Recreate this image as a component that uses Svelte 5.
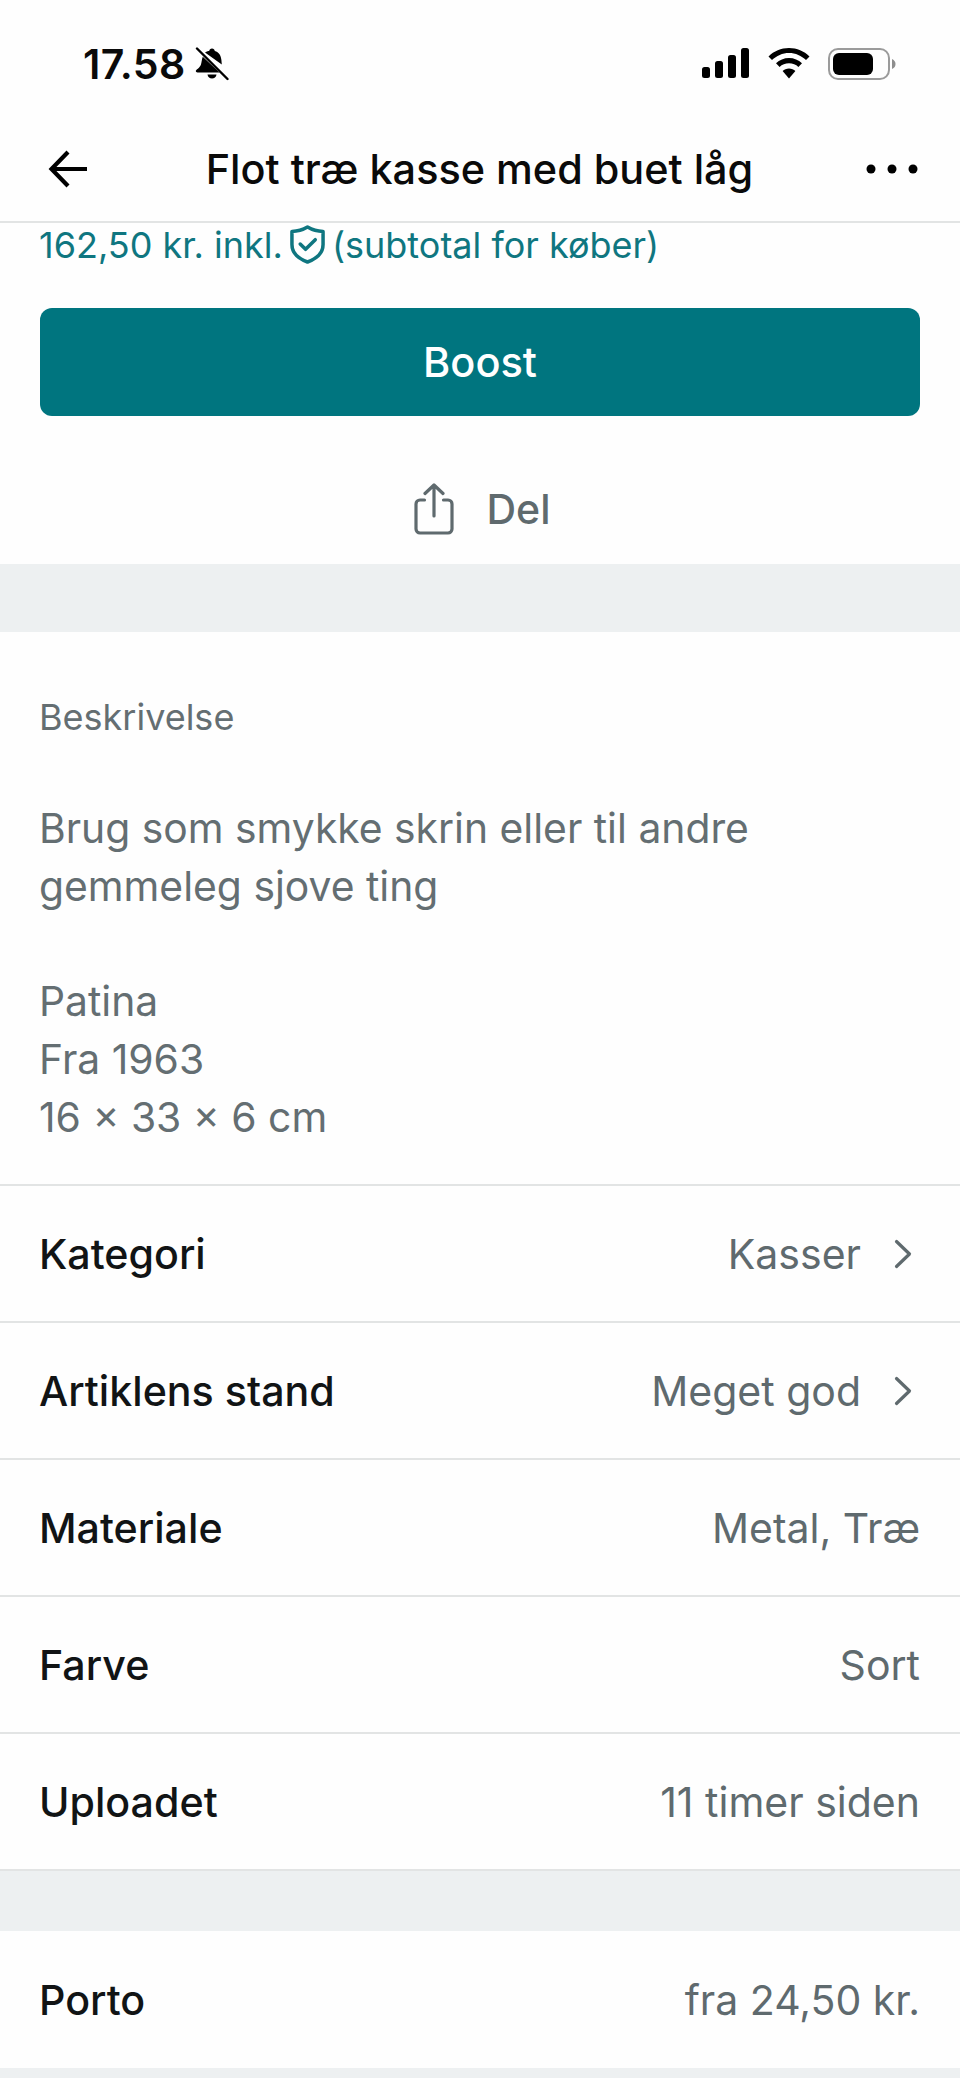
<script>
  const rows = [
    { label: 'Kategori', value: 'Kasser', chevron: true },
    { label: 'Artiklens stand', value: 'Meget god', chevron: true },
    { label: 'Materiale', value: 'Metal, Træ' },
    { label: 'Farve', value: 'Sort' },
    { label: 'Uploadet', value: '11 timer siden' }
  ];
</script>

<div class="page">
  <div class="status">
    <div class="time-group">
      <span class="time">17.58</span>
      <svg class="bell" viewBox="0 0 34 34" width="34" height="34" aria-hidden="true">
        <path d="M17 1.500c1.600 0 2.600 1 2.800 2.400 4.200 1.100 6.200 4.600 6.600 9l0.400 4.600L10 5.500C12 4 13.400 3.900 14.200 3.900 14.400 2.500 15.400 1.500 17 1.500z" fill="#000"/>
        <path d="M7.800 9.700 24.500 25.500H2.500c-1 0-1.700-.6-1.700-1.400 0-1.600 3.800-3.100 5-6.200 .9-2.400 1-6.200 2-8.200z" fill="#000"/>
        <path d="M12.500 27.500h9c-.3 2.400-2.300 4-4.500 4s-4.200-1.600-4.500-4z" fill="#000"/>
        <path d="M2 1.500 32.500 32" stroke="#000" stroke-width="2.400" stroke-linecap="round"/>
      </svg>
    </div>
    <div class="sys">
      <svg viewBox="0 0 48 31" width="48" height="31" aria-hidden="true">
        <rect x="0" y="19" width="8" height="11" rx="2.500"/>
        <rect x="13" y="13" width="8" height="17" rx="2.500"/>
        <rect x="26" y="7" width="8" height="23" rx="2.500"/>
        <rect x="39" y="0" width="8" height="30" rx="2.500"/>
      </svg>
      <svg viewBox="0 0 42 31" width="42" height="31" aria-hidden="true">
        <path d="M21 0C13 0 6 3 0.500 8.500l3.500 3.600C8.500 7.700 14.500 5 21 5s12.500 2.700 17 7.100l3.500-3.600C36 3 29 0 21 0z"/>
        <path d="M21 10c-5 0-9.500 2-13 5.300l3.600 3.600C14 16.500 17.400 15.200 21 15.200s7 1.300 9.400 3.700l3.600-3.600C30.500 12 26 10 21 10z"/>
        <path d="M21 20.500c-2.500 0-4.800 1-6.400 2.600L21 30.500l6.400-7.400c-1.600-1.600-3.900-2.600-6.400-2.600z"/>
      </svg>
      <svg viewBox="0 0 68 33" width="68" height="33" aria-hidden="true">
        <rect x="1" y="1" width="60" height="30" rx="9" fill="none" stroke="#9b9b9b" stroke-width="2"/>
        <rect x="5" y="5" width="40" height="22" rx="6" fill="#000"/>
        <path d="M64 11c2.500 1 3.500 3 3.500 5s-1 4-3.500 5z" fill="#8e8e8e"/>
      </svg>
    </div>
  </div>

  <header class="nav">
    <svg class="back" viewBox="0 0 40 40" width="40" height="40" aria-hidden="true">
      <path d="M39 20H5M20 3 3.500 20 20 37" fill="none" stroke="#000" stroke-width="4.200"/>
    </svg>
    <h1>Flot træ kasse med buet låg</h1>
    <svg class="more" viewBox="0 0 52 12" width="52" height="12" aria-hidden="true">
      <circle cx="5" cy="6" r="4.500"/><circle cx="26" cy="6" r="4.500"/><circle cx="47" cy="6" r="4.500"/>
    </svg>
  </header>

  <section class="actions">
    <p class="price">
      <span>162,50 kr. inkl.</span>
      <svg viewBox="0 0 36 40" width="35" height="39" aria-hidden="true">
        <path d="M18 2 C23 5 28 6.500 34 6.500V20c0 9-6.500 14.500-16 18C8.500 34.500 2 29 2 20V6.500C8 6.500 13 5 18 2z" fill="none" stroke="#0f7680" stroke-width="3.600" stroke-linejoin="round"/>
        <path d="M10.500 19.500 16 25l10-10" fill="none" stroke="#0f7680" stroke-width="3.600" stroke-linecap="round" stroke-linejoin="round"/>
      </svg>
      <span>(subtotal for køber)</span>
    </p>
    <button class="boost">Boost</button>
    <div class="share">
      <svg viewBox="0 0 40 52" width="40" height="52" aria-hidden="true">
        <path d="M10.500 17H6a4 4 0 0 0-4 4v25a4 4 0 0 0 4 4h28a4 4 0 0 0 4-4V21a4 4 0 0 0-4-4h-4.500M20 33V2M11 10.500 20 2l9 8.500" fill="none" stroke="#5f6a6e" stroke-width="3.200" stroke-linecap="round" stroke-linejoin="round"/>
      </svg>
      <span>Del</span>
    </div>
  </section>

  <div class="band first"></div>

  <section class="desc">
    <h2>Beskrivelse</h2>
    <p>Brug som smykke skrin eller til andre<br />gemmeleg sjove ting</p>
    <p>Patina<br />Fra 1963<br />16 × 33 × 6 cm</p>
  </section>

  <ul class="rows">
    {#each rows as row}
      <li>
        <span class="label">{row.label}</span>
        <span class="value">
          {row.value}
          {#if row.chevron}
            <svg viewBox="0 0 18 30" width="18" height="30" aria-hidden="true">
              <path d="M2.500 2.500 15.500 15 2.500 27.500" fill="none" stroke="#5f6a6e" stroke-width="3.200" stroke-linecap="round" stroke-linejoin="round"/>
            </svg>
          {/if}
        </span>
      </li>
    {/each}
  </ul>

  <div class="band second"></div>

  <div class="porto">
    <span class="label">Porto</span>
    <span class="value">fra 24,50 kr.</span>
  </div>

  <div class="band last"></div>
</div>

<style>
  :global(body) {
    margin: 0;
    background: #fefefe;
  }
  .page {
    width: 960px;
    height: 2078px;
    overflow: hidden;
    font-family: Inter, "Liberation Sans", sans-serif;
    background: #fefefe;
  }
  .status {
    height: 128px;
    box-sizing: border-box;
    padding: 44px 64px 0 83px;
    display: flex;
    justify-content: space-between;
    align-items: flex-start;
  }
  .time-group {
    display: flex;
    align-items: center;
    gap: 9px;
  }
  .time {
    font-size: 41px;
    letter-spacing: 0.4px;
    line-height: 40px;
    font-weight: 600;
    color: #0a0a0a;
  }
  .sys {
    display: flex;
    align-items: flex-start;
    gap: 18px;
    padding-top: 4px;
  }
  .sys svg {
    fill: #000;
  }
  .nav {
    height: 95px;
    box-sizing: border-box;
    border-bottom: 2px solid #e2e4e4;
    padding: 0 42px 12px 48px;
    display: flex;
    align-items: center;
    justify-content: space-between;
  }
  .nav h1 {
    margin: 0 0 0 5px;
    font-size: 41.400px;
    font-weight: 500;
    color: #0a0a0a;
    line-height: 48px;
  }
  .more {
    fill: #000;
  }
  .actions {
    padding: 0 40px 0 39px;
    height: 341px;
  }
  .price {
    margin: 0;
    height: 85px;
    display: flex;
    align-items: flex-start;
    gap: 7px;
    font-size: 36px;
    line-height: 45px;
    color: #0f7680;
  }
  .price svg {
    margin-top: 2px;
  }
  .boost {
    display: block;
    width: 880px;
    height: 108px;
    margin-left: 1px;
    padding-top: 3px;
    border: 0;
    border-radius: 12px;
    background: #00757f;
    color: #fff;
    font: 500 41.500px/1 Inter, sans-serif;
  }
  .share {
    height: 148px;
    box-sizing: border-box;
    padding: 38px 0 0 6px;
    display: flex;
    justify-content: center;
    align-items: center;
    gap: 32px;
    font-size: 41px;
    font-weight: 500;
    color: #5f6a6e;
  }
  .band {
    background: #edf0f1;
  }
  .first {
    height: 68px;
  }
  .desc {
    padding: 63px 39px 0;
    height: 552px;
    box-sizing: border-box;
    color: #646e72;
  }
  .desc h2 {
    margin: 0 0 60px;
    font-size: 36px;
    line-height: 44px;
    font-weight: 400;
  }
  .desc p {
    margin: 0 0 57px;
    font-size: 40.850px;
    line-height: 58px;
  }
  .rows {
    list-style: none;
    margin: 0;
    padding: 0;
  }
  .rows li {
    height: 137px;
    box-sizing: border-box;
    border-top: 2px solid #e2e4e4;
    padding: 0 40px 0 39px;
    display: flex;
    justify-content: space-between;
    align-items: center;
  }
  .rows li:last-child {
    height: 139px;
    border-bottom: 2px solid #e2e4e4;
  }
  .label {
    font-size: 41.200px;
    font-weight: 500;
    color: #111415;
  }
  .value {
    display: flex;
    align-items: center;
    gap: 33px;
    font-size: 41px;
    color: #5f6a6e;
  }
  .value svg {
    margin-right: 8px;
  }
  .second {
    height: 60px;
  }
  .porto {
    height: 137px;
    padding: 0 40px 0 39px;
    display: flex;
    justify-content: space-between;
    align-items: center;
  }
  .last {
    height: 12px;
  }
</style>
